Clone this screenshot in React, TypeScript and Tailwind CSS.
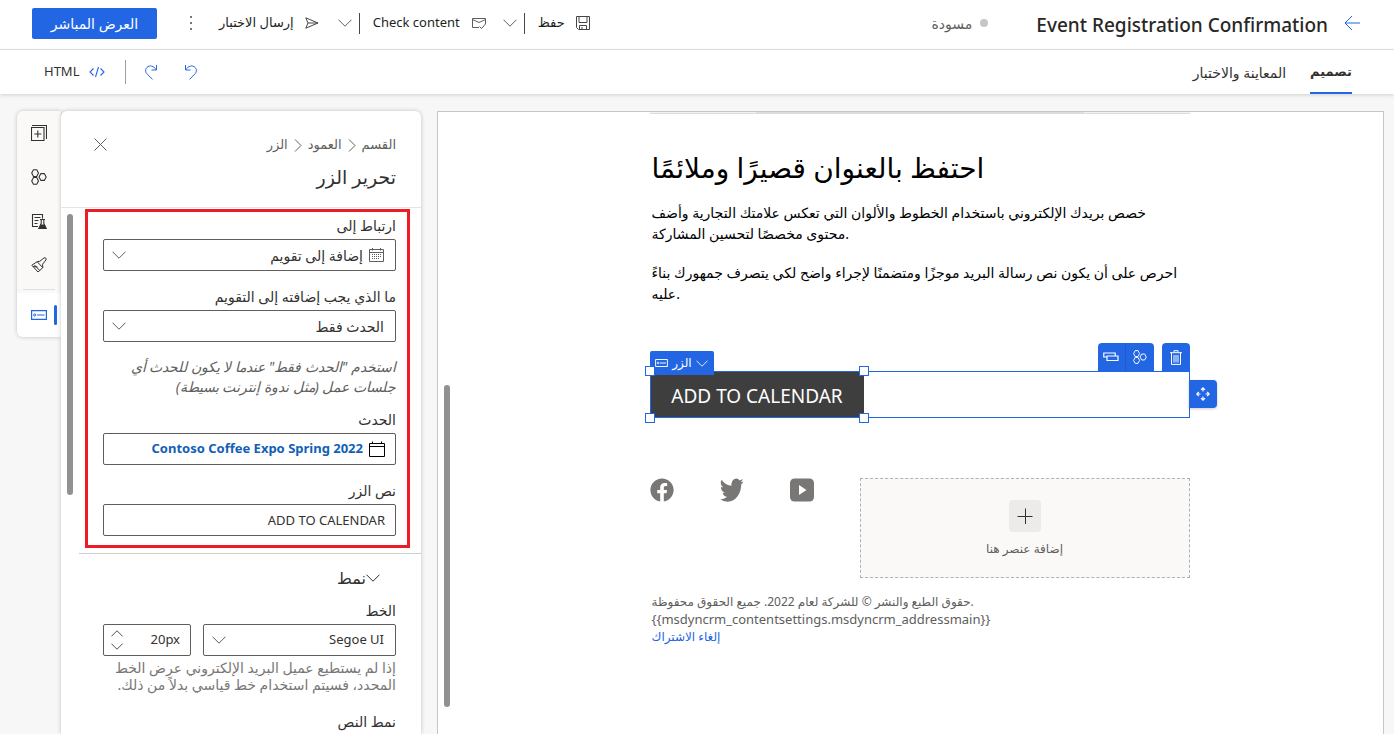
import type { ReactNode } from 'react';
import { FaFacebook } from 'react-icons/fa';

type IconProps = { className?: string };

function Svg({ box, className, children }: { box: string; className?: string; children: ReactNode }) {
  return (
    <svg viewBox={box} className={className} fill="none" stroke="currentColor" strokeWidth="1" aria-hidden="true">
      {children}
    </svg>
  );
}

function Chevron({ className = 'w-[14px] h-2' }: IconProps) {
  return (
    <Svg box="0 0 14 8" className={className}>
      <path d="M.5 .7 7 7.2 13.5 .7" />
    </Svg>
  );
}

function CrumbArrow() {
  return (
    <Svg box="0 0 8 13" className="h-[13px] w-2">
      <path d="M1 .5 7 6.500 1 12.500" />
    </Svg>
  );
}

function SaveIcon() {
  return (
    <Svg box="0 0 14 14" className="h-[14px] w-[14px] text-[#484644]">
      <path d="M.5 .5h13v13h-11l-2-2zM3 .5v6h8v-6M3.500 13.500v-4h7v4M6 11v2.500" />
    </Svg>
  );
}

function MailCheckIcon() {
  return (
    <Svg box="0 0 16 14" className="h-[14px] w-4 text-[#605e5c]">
      <path d="M8 11.500H1.500v-9h13v5.500M1.500 3.500 8 6.500l6.500-3M8.500 10.500l2 2 4-4.500" />
    </Svg>
  );
}

function SendIcon() {
  return (
    <Svg box="0 0 14 12" className="h-3 w-[14px] text-[#484644]">
      <path d="M.8.8 13 6 .8 11.200 3 6zM3 6h10" />
    </Svg>
  );
}

function BackIcon() {
  return (
    <Svg box="0 0 16 16" className="h-4 w-4">
      <path d="M8 1 1 8l7 7M1 8h15" />
    </Svg>
  );
}

function TurnIcon({ className = '' }: IconProps) {
  return (
    <Svg box="0 0 14 16" className={`h-4 w-[14px] ${className}`}>
      <path d="M1.500 1v5H6.500M1.800 5.700C4 2 8.500 .7 11 3.400c2.200 2.400 1.500 5-.2 6.700L5.500 15.400" />
    </Svg>
  );
}

function CodeIcon() {
  return (
    <Svg box="0 0 16 12" className="h-3 w-4">
      <path d="M4.500 2.500 1 6l3.500 3.500M11.500 2.500 15 6l-3.500 3.500M9.500 1 6.500 11" strokeWidth="1.100" />
    </Svg>
  );
}

function CloseIcon() {
  return (
    <Svg box="0 0 13 13" className="h-[13px] w-[13px]">
      <path d="M.5.5l12 12M12.500.5l-12 12" />
    </Svg>
  );
}

function AddLayerIcon() {
  return (
    <Svg box="0 0 16 16" className="h-4 w-4">
      <path d="M.5 2.500h12.500v13H.5zM1 .5h14.500v13.500M6.800 5.500v7M3.300 9h7" strokeWidth="1.100" />
    </Svg>
  );
}

function HexagonsIcon({ className = 'w-4 h-4' }: IconProps) {
  return (
    <Svg box="0 0 16 16" className={className}>
      <path
        d="M2.500 .7h3.200l1.800 3.400-1.800 3.400H2.500L.7 4.100zM2.500 8.500h3.200l1.800 3.400-1.800 3.400H2.500L.7 11.900zM9.900 4.600h3.400l1.900 3.400-1.900 3.400H9.900L8 8z"
        strokeWidth="1.100"
        strokeLinejoin="round"
      />
    </Svg>
  );
}

function TestDocIcon() {
  return (
    <Svg box="0 0 16 16" className="h-4 w-4">
      <path
        d="M7 13.500H1.500V1.500h10v4M3.500 4.500h6M3.500 7.500h4M3.500 10.500h3M9 6.500h5M10.200 6.500v4L7.800 15.500h7.500l-2.500-5v-4"
        strokeWidth="1.100"
      />
      <path d="M9.500 11.500h4l2 4H7.800z" fill="currentColor" stroke="none" />
    </Svg>
  );
}

function BrushIcon() {
  return (
    <Svg box="0 0 16 16" className="h-4 w-4">
      <path
        d="M6.200 4.700 .8 8.200 7 15l4.800-4.300zM3.400 7.900l5.300 5.600M2 9.500l4.500 .5M6.200 4.700l2.600-.4L13 .9c1.500-.6 2.700.6 2 2L11.600 7.200l.2 3.500"
        strokeLinejoin="round"
      />
    </Svg>
  );
}

function ButtonBlockIcon({ className = 'w-4 h-[10px]' }: IconProps) {
  return (
    <Svg box="0 0 16 10" className={className}>
      <path d="M.6.6h14.800v8.800H.6zM6 5h7.500" strokeWidth="1.200" />
      <circle cx="3.700" cy="5" r="1.100" />
    </Svg>
  );
}

function CalendarGridIcon() {
  return (
    <Svg box="0 0 15 14" className="h-[14px] w-[15px] text-[#605e5c]">
      <path d="M.5 1.500h14v12H.5zM.5 4.500h14M3.500 0v2.500M11.500 0v2.500" />
      <path d="M3 6.500h10M3 8.500h10M3 10.500h8" strokeDasharray="1 1" />
    </Svg>
  );
}

function CalendarIcon() {
  return (
    <Svg box="0 0 16 16" className="h-4 w-4 text-black">
      <path d="M.5 2.500h15v13H.5zM.5 5.500h15M3.500 .5v2M12.500 .5v2" />
    </Svg>
  );
}

function TrashIcon() {
  return (
    <Svg box="0 0 12 15" className="h-[15px] w-3">
      <path d="M0 2.700h12M4 2.500V.7h4v1.800M1.500 2.700v11.700h9V2.700M4 5v7.500M6 5v7.500M8 5v7.500" />
    </Svg>
  );
}

function DuplicateIcon() {
  return (
    <Svg box="0 0 16 12" className="h-3 w-4">
      <path d="M4 6H.8V2h11.400v2.500M4 5h11v4.500H4z" strokeWidth="1.200" />
    </Svg>
  );
}

function MoveIcon() {
  return (
    <Svg box="0 0 14 14" className="h-[14px] w-[14px]">
      <path
        d="M5 2.800 7 .8l2 2M7 1v3.500M5 11.200l2 2 2-2M7 13V9.500M2.800 5l-2 2 2 2M1 7h3.500M11.200 5l2 2-2 2M13 7H9.500"
        strokeWidth="1.200"
      />
    </Svg>
  );
}

function TwitterIcon() {
  return (
    <svg viewBox="0 0 24 24" className="h-6 w-6" fill="currentColor" aria-hidden="true">
      <path d="M23.950 4.570a10 10 0 0 1-2.820.77 4.960 4.960 0 0 0 2.160-2.720c-.95.55-2 .95-3.130 1.180a4.920 4.920 0 0 0-8.380 4.480C7.690 8.090 4.070 6.130 1.640 3.160a4.920 4.920 0 0 0 1.520 6.570 4.900 4.900 0 0 1-2.230-.61v.06a4.920 4.920 0 0 0 3.950 4.830 5 5 0 0 1-2.210.08 4.940 4.940 0 0 0 4.600 3.420A9.870 9.870 0 0 1 0 19.540a13.990 13.990 0 0 0 7.550 2.210c9.050 0 14-7.500 14-13.980 0-.21 0-.42-.02-.63a9.940 9.940 0 0 0 2.460-2.550z" transform="translate(0 -2) scale(.98 1.180)" />
    </svg>
  );
}

function YoutubeIcon() {
  return (
    <svg viewBox="0 0 24 24" className="h-6 w-6" aria-hidden="true">
      <rect y=".5" width="24" height="23" rx="4.500" fill="currentColor" />
      <path d="M9 7 16.500 12 9 17z" fill="#fff" />
    </svg>
  );
}

function Field({ id, label, children }: { id: string; label: string; children: ReactNode }) {
  return (
    <div className="flex flex-col gap-[2px]">
      <label htmlFor={id} className="h-5 text-[14px] leading-[18px] font-medium">
        {label}
      </label>
      {children}
    </div>
  );
}

function Select({ id, value, icon, className = 'text-[14px]' }: { id: string; value: string; icon?: ReactNode; className?: string }) {
  return (
    <div className={`relative flex h-8 items-center gap-[6px] rounded-xs border border-[#605e5c] pr-[11px] ${className}`}>
      {icon}
      <select id={id} defaultValue={value} className="h-full min-w-0 flex-1 appearance-none bg-transparent outline-none">
        <option>{value}</option>
      </select>
      <span className="pointer-events-none absolute left-2 text-[#605e5c]">
        <Chevron />
      </span>
    </div>
  );
}

const rail = [
  { name: 'العناصر', icon: <AddLayerIcon /> },
  { name: 'المكونات', icon: <HexagonsIcon /> },
  { name: 'الاختبار', icon: <TestDocIcon /> },
  { name: 'النسق', icon: <BrushIcon /> },
];

const handles = ['-top-[5px] -left-[5px]', '-top-[5px] -right-[5px]', '-bottom-[5px] -left-[5px]', '-bottom-[5px] -right-[5px]'];

function Header() {
  return (
    <header className="flex h-[50px] shrink-0 items-center border-b border-[#e5e5e5] bg-white pr-[34px] pb-[3px] pl-8 text-[13px] text-[#201f1e]">
      <button aria-label="رجوع" className="text-[#2266e3]">
        <BackIcon />
      </button>
      <h1 dir="ltr" className="mr-4 pt-1 text-[19px] leading-7 font-medium text-[#292827]">
        Event Registration Confirmation
      </h1>
      <span className="mr-12 flex items-center gap-2 text-[14px] text-[#605e5c]">
        <i className="h-2 w-2 rounded-full bg-[#c8c6c4]" />
        مسودة
      </span>
      <div className="mr-auto flex items-center">
        <button className="flex items-center gap-[11px]">
          <SaveIcon />
          حفظ
        </button>
        <span className="mr-[13px] h-[21px] w-px bg-[#484644]" />
        <button aria-label="خيارات الحفظ" className="mr-[7px] text-[#605e5c]">
          <Chevron />
        </button>
        <button className="mr-4 flex items-center gap-[11px]">
          <MailCheckIcon />
          Check content
        </button>
        <span className="mr-[13px] h-[21px] w-px bg-[#484644]" />
        <button aria-label="خيارات الفحص" className="mr-[7px] text-[#605e5c]">
          <Chevron />
        </button>
        <button className="mr-[19px] flex items-center gap-[11px]">
          <SendIcon />
          إرسال الاختبار
        </button>
        <button aria-label="المزيد" className="mr-[27px] flex flex-col gap-1">
          <i className="h-[2px] w-[2px] bg-[#797775]" />
          <i className="h-[2px] w-[2px] bg-[#797775]" />
          <i className="h-[2px] w-[2px] bg-[#797775]" />
        </button>
        <button className="mr-[33px] h-[31px] w-[125px] rounded-xs bg-[#2266e3] text-[14px] font-medium text-white">العرض المباشر</button>
      </div>
    </header>
  );
}

function Toolbar() {
  return (
    <div className="relative z-10 flex h-[44px] shrink-0 items-center bg-white pr-[42px] pl-11 text-[14px] text-[#323130] shadow-[0_1px_4px_rgba(0,0,0,0.16)]">
      <nav className="flex h-full items-stretch gap-6">
        <a href="#design" className="flex items-center border-b-2 border-[#2266e3] pt-[2px] text-[13px] font-semibold">
          تصميم
        </a>
        <a href="#preview" className="flex items-center border-b-2 border-transparent pt-[2px]">
          المعاينة والاختبار
        </a>
      </nav>
      <div className="mr-auto flex items-center text-[13px]">
        <button aria-label="تراجع" className="text-[#2266e3]">
          <TurnIcon />
        </button>
        <button aria-label="إعادة" className="mr-[26px] text-[#2266e3]">
          <TurnIcon className="-scale-x-100" />
        </button>
        <span className="mr-[18px] h-6 w-px bg-[#a19f9d]" />
        <button className="mr-5 flex items-center gap-[10px]">
          <span className="text-[#2266e3]">
            <CodeIcon />
          </span>
          HTML
        </button>
      </div>
    </div>
  );
}

function EditPanel() {
  return (
    <aside className="relative z-[1] flex w-[360px] shrink-0 flex-col rounded-t-md bg-white text-[#323130] shadow-[0_0_4px_rgba(0,0,0,0.22)]">
      <div className="flex h-[97px] shrink-0 items-start border-b border-[#e5e5e5] pt-6 pr-[25px] pl-[33px]">
        <div>
          <nav className="flex h-5 items-center gap-[6px] text-[13px] text-[#605e5c]">
            <a href="#section">القسم</a>
            <CrumbArrow />
            <a href="#column">العمود</a>
            <CrumbArrow />
            <a href="#button">الزر</a>
          </nav>
          <h2 className="mt-2 text-[19px] leading-7 font-medium">تحرير الزر</h2>
        </div>
        <button aria-label="إغلاق" className="mt-[3px] mr-auto text-[#605e5c]">
          <CloseIcon />
        </button>
      </div>
      <div className="flex min-h-0 flex-1">
        <div className="min-w-0 flex-1">
          <div className="mt-px mr-[11px] ml-[6px] flex flex-col border-3 border-[#ee1c25] pt-[5px] pr-[11px] pb-[9px] pl-[15px]">
            <Field id="link" label="ارتباط إلى">
              <Select id="link" value="إضافة إلى تقويم" icon={<CalendarGridIcon />} />
            </Field>
            <div className="mt-[17px]">
              <Field id="what" label="ما الذي يجب إضافته إلى التقويم">
                <Select id="what" value="الحدث فقط" />
              </Field>
            </div>
            <p className="mt-[15px] text-[14px] leading-5 text-[#605e5c] italic">
              استخدم "الحدث فقط" عندما لا يكون للحدث أي
              <br />
              جلسات عمل (مثل ندوة إنترنت بسيطة)
            </p>
            <div className="mt-[14px]">
              <Field id="event" label="الحدث">
                <a
                  id="event"
                  href="#event"
                  className="flex h-8 items-center gap-[6px] rounded-xs border border-[#605e5c] pr-[10px] text-[13px] font-bold text-[#1160b7]"
                >
                  <CalendarIcon />
                  <bdi>Contoso Coffee Expo Spring 2022</bdi>
                </a>
              </Field>
            </div>
            <div className="mt-[17px]">
              <Field id="text" label="نص الزر">
                <input
                  id="text"
                  dir="ltr"
                  defaultValue="ADD TO CALENDAR"
                  className="h-8 w-full rounded-xs border border-[#605e5c] px-[10px] text-right text-[13px] outline-none"
                />
              </Field>
            </div>
          </div>
          <div className="mt-[5px] border-t border-[#d2d0ce] pr-[25px] pl-6">
            <button className="mt-3 mr-4 flex h-6 items-center text-[16px] font-medium">
              <Chevron />
              نمط
            </button>
            <div className="mt-3 flex items-end gap-3">
              <div className="min-w-0 flex-1">
                <Field id="font" label="الخط">
                  <Select id="font" value="Segoe UI" className="text-[13px]" />
                </Field>
              </div>
              <div className="flex h-8 w-[88px] items-center rounded-xs border border-[#605e5c] pr-[10px] pl-[7px]">
                <input aria-label="حجم الخط" dir="ltr" defaultValue="20px" className="w-full min-w-0 text-right text-[13px] outline-none" />
                <span className="flex flex-col gap-[6px]">
                  <button aria-label="زيادة">
                    <Chevron className="block h-[7px] w-3 rotate-180" />
                  </button>
                  <button aria-label="إنقاص">
                    <Chevron className="block h-[7px] w-3" />
                  </button>
                </span>
              </div>
            </div>
            <p className="mt-[3px] text-[14px] leading-[17px] text-[#797775]">
              إذا لم يستطيع عميل البريد الإلكتروني عرض الخط
              <br />
              المحدد، فسيتم استخدام خط قياسي بدلاً من ذلك.
            </p>
            <h3 className="mt-5 text-[14px] leading-[18px] font-medium">نمط النص</h3>
          </div>
        </div>
        <div className="w-[18px] shrink-0 px-[6px] pt-[6px]">
          <div className="h-[281px] rounded-full bg-[#919191]" />
        </div>
      </div>
    </aside>
  );
}

function Rail() {
  return (
    <nav className="flex w-11 shrink-0 flex-col self-start overflow-hidden rounded-l-md bg-[#faf9f8] text-[#323130] shadow-[0_0_4px_rgba(0,0,0,0.22)]">
      {rail.map((item) => (
        <button key={item.name} aria-label={item.name} className="flex h-11 w-full items-center justify-center">
          {item.icon}
        </button>
      ))}
      <div className="mx-[6px] mt-[2px] h-px bg-[#e1dfdd]" />
      <button aria-label="الزر" className="mt-[3px] flex h-11 w-full items-center gap-[7px] bg-white pr-1 text-[#2266e3]">
        <span className="h-5 w-[3px] rounded-full bg-[#2266e3]" />
        <ButtonBlockIcon />
      </button>
    </nav>
  );
}

function Canvas() {
  return (
    <main dir="ltr" className="flex min-w-0 flex-1 overflow-hidden border border-b-0 border-[#c8c6c4] bg-white text-black">
      <div className="w-[18px] shrink-0 px-[6px] pt-[273px]">
        <div className="h-[322px] rounded-full bg-[#919191]" />
      </div>
      <div className="min-w-0 flex-1">
        <div className="mx-auto w-[540px]">
          <div className="flex h-[2px] justify-center border-b border-[#dcdcdc] bg-[#f3f2f1]">
            <div className="w-[328px] bg-[#dcdcdc]" />
          </div>
          <h2 className="mt-[33px] px-[2px] text-[28px] leading-10">احتفظ بالعنوان قصيرًا وملائمًا</h2>
          <p className="mt-[15px] px-[2px] text-[14px] leading-[21px]">
            خصص بريدك الإلكتروني باستخدام الخطوط والألوان التي تعكس علامتك التجارية وأضف
            <br />
            محتوى مخصصًا لتحسين المشاركة.
          </p>
          <p className="mt-[18px] px-[2px] text-[14px] leading-[21px]">
            احرص على أن يكون نص رسالة البريد موجزًا ومتضمنًا لإجراء واضح لكي يتصرف جمهورك بناءً
            <br />
            عليه.
          </p>
          <div className="relative mt-[67px] h-[47px] border border-[#2266e3]">
            <div className="relative -mt-px -ml-px h-[47px] w-[214px]">
              <a
                href="#calendar"
                className="flex h-full items-center justify-center border border-r-0 border-[#2266e3] bg-[#3e3e3e] pt-1 text-[19px] text-white"
              >
                ADD TO CALENDAR
              </a>
              <button className="absolute -top-5 left-0 flex h-6 w-16 items-center justify-center gap-1 rounded-t-xs bg-[#2266e3] text-[12px] font-medium text-white">
                <ButtonBlockIcon className="h-2 w-[13px]" />
                الزر
                <Chevron className="h-[7px] w-3" />
              </button>
              {handles.map((place) => (
                <i key={place} className={`absolute h-[10px] w-[10px] border border-[#2266e3] bg-white ${place}`} />
              ))}
            </div>
            <div className="absolute -top-[29px] -right-px flex text-white">
              <button aria-label="تكرار" className="flex h-7 w-7 items-center justify-center rounded-tl-sm border-r border-[#1d5bce] bg-[#2266e3]">
                <DuplicateIcon />
              </button>
              <button aria-label="حفظ كمكون" className="mr-2 flex h-7 w-7 items-center justify-center rounded-tr-sm bg-[#2266e3]">
                <HexagonsIcon className="h-[14px] w-[14px]" />
              </button>
              <button aria-label="حذف" className="flex h-7 w-7 items-center justify-center rounded-t-sm bg-[#2266e3]">
                <TrashIcon />
              </button>
            </div>
            <button
              aria-label="نقل"
              className="absolute top-2 -right-7 flex h-7 w-7 items-center justify-center rounded-r-sm bg-[#2266e3] text-white shadow-[0_1px_3px_rgba(0,0,0,0.2)]"
            >
              <MoveIcon />
            </button>
          </div>
          <div className="mt-[60px] flex items-start">
            <div className="flex w-[210px] gap-[46px] text-[#797775]">
              <a href="#facebook" aria-label="Facebook">
                <FaFacebook className="h-6 w-6" />
              </a>
              <a href="#twitter" aria-label="Twitter">
                <TwitterIcon />
              </a>
              <a href="#youtube" aria-label="YouTube">
                <YoutubeIcon />
              </a>
            </div>
            <div className="flex h-[100px] flex-1 flex-col items-center border border-dashed border-[#b3b0ad] bg-[#faf9f8] pt-[21px] text-[12px] text-[#605e5c]">
              <button aria-label="إضافة" className="flex h-8 w-8 items-center justify-center rounded-sm bg-[#edebe9] text-[#323130]">
                <Svg box="0 0 16 16" className="h-4 w-4">
                  <path d="M.5 8.500h15M8.500 .5v15.500" />
                </Svg>
              </button>
              <span className="mt-2 leading-[18px]">إضافة عنصر هنا</span>
            </div>
          </div>
          <footer className="mt-[15px] px-[2px] text-[12px] leading-[17px] text-[#605e5c]">
            <p>حقوق الطبع والنشر © للشركة لعام 2022. جميع الحقوق محفوظة.</p>
            <p className="text-[13px] leading-[18px]">{'{{msdyncrm_contentsettings.msdyncrm_addressmain}}'}</p>
            <a href="#unsubscribe" className="text-[#2266e3]">
              إلغاء الاشتراك
            </a>
          </footer>
        </div>
      </div>
    </main>
  );
}

export default function App() {
  return (
    <div
      dir="rtl"
      lang="ar"
      className="flex h-screen flex-col overflow-hidden bg-[#f7f7f7] font-['Noto_Sans','DejaVu_Sans',sans-serif]"
    >
      <Header />
      <Toolbar />
      <div className="flex min-h-0 flex-1 pt-[17px] pr-[10px] pl-[17px]">
        <Canvas />
        <div className="mr-4 flex">
          <EditPanel />
          <Rail />
        </div>
      </div>
    </div>
  );
}
